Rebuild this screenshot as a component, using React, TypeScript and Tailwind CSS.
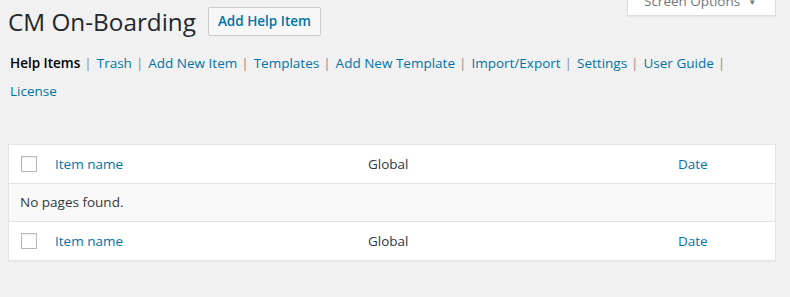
import React from "react"

const navItems = [
  { label: "Help Items", current: true },
  { label: "Trash" },
  { label: "Add New Item" },
  { label: "Templates" },
  { label: "Add New Template" },
  { label: "Import/Export" },
  { label: "Settings" },
  { label: "User Guide" },
]

function Checkbox() {
  return <span className="block w-4 h-4 border border-[#b4b9be] bg-white shadow-[inset_0_1px_2px_rgba(0,0,0,0.07)]" />
}

function HeaderRow({ border }: { border: string }) {
  return (
    <div className={`grid grid-cols-[36px_313px_310px_1fr] items-center h-[39px] text-[13.5px] ${border}`}>
      <div className="pl-3">
        <Checkbox />
      </div>
      <div className="pl-[10px] text-[#0073aa]">Item name</div>
      <div className="pl-[10px] text-[#32373c]">Global</div>
      <div className="pl-[10px] text-[#0073aa]">Date</div>
    </div>
  )
}

export default function App() {
  return (
    <div className="relative w-[790px] h-[297px] overflow-hidden bg-[#f1f1f1] text-[13px] text-[#444] font-['Open_Sans',sans-serif]">
      {/* Screen Options tab */}
      <div className="absolute right-[14px] top-[-12px] w-[149px] h-[28px] bg-white border border-[#ddd] border-t-0 shadow-[0_1px_1px_rgba(0,0,0,0.04)] flex items-center pl-4 gap-2 text-[13.5px] text-[#72777c]">
        <span>Screen Options</span>
        <span className="text-[8px]">▼</span>
      </div>

      <div className="pl-2 pr-[14px]">
        {/* Title */}
        <div className="flex items-center gap-[12px] pt-[7px]">
          <h1 className="text-[24.3px] leading-[29px] text-[#23282d] font-normal">CM On-Boarding</h1>
          <button className="h-[29px] px-[9px] border border-[#ccc] rounded-[2px] bg-[#f7f7f7] text-[13.5px] text-[#0073aa] font-semibold leading-none">
            Add Help Item
          </button>
        </div>

        {/* Sub nav */}
        <div className="pt-[13px] pl-[2px] leading-[28px] text-[13.5px]">
          <ul className="flex">
            {navItems.map((item) => (
              <li key={item.label} className="whitespace-pre">
                <span className={item.current ? "font-semibold text-black" : "text-[#0073aa]"}>{item.label}</span>
                <span className="pl-[4px] pr-[5px] text-[#8a8a8a]">|</span>
              </li>
            ))}
          </ul>
          <div className="text-[#0073aa]">License</div>
        </div>

        {/* Table */}
        <div className="mt-[39px] bg-white border border-[#e5e5e5] shadow-[0_1px_1px_rgba(0,0,0,0.04)]">
          <HeaderRow border="border-b border-[#e1e1e1]" />
          <div className="h-[37px] bg-[#f9f9f9] flex items-center pl-[11px] text-[13.5px] text-[#32373c]">No pages found.</div>
          <HeaderRow border="border-t border-[#e1e1e1]" />
        </div>
      </div>
    </div>
  )
}
